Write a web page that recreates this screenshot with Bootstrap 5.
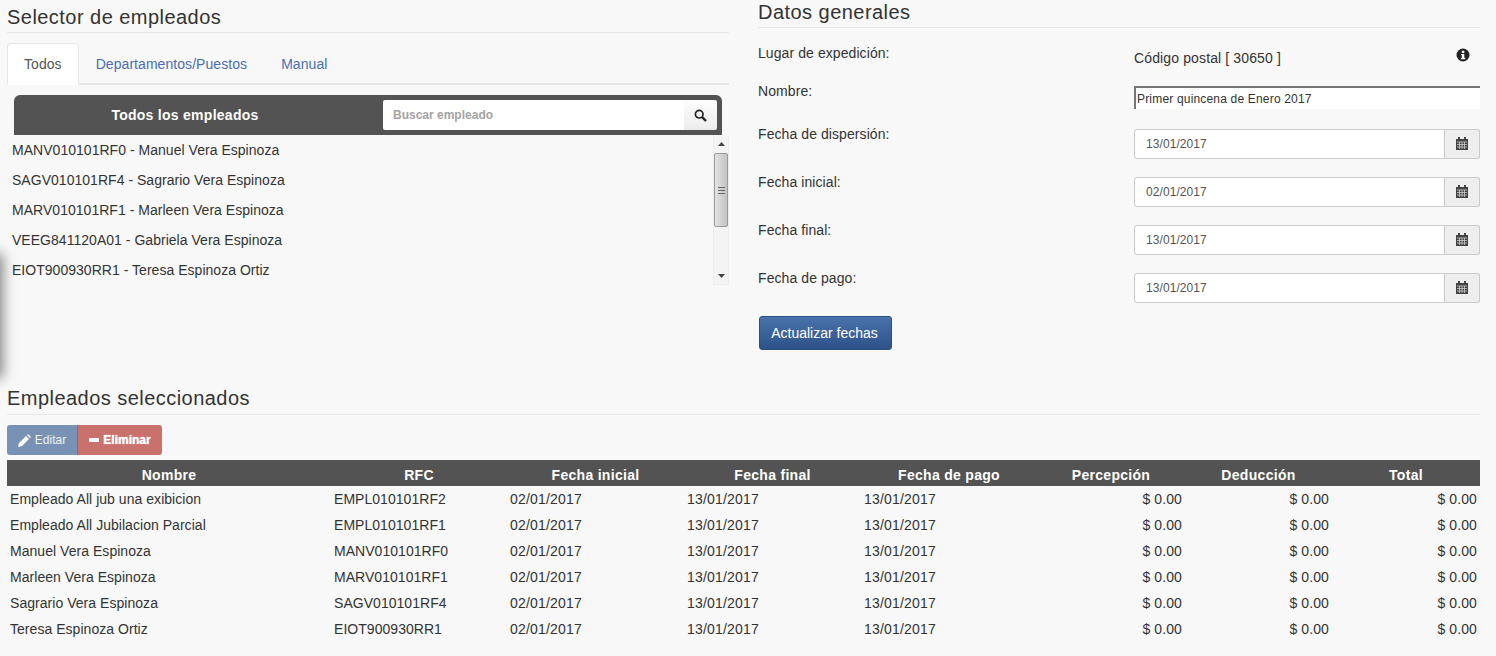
<!DOCTYPE html>
<html lang="es">
<head>
<meta charset="utf-8">
<title>Selector de empleados</title>
<link rel="stylesheet" href="https://cdn.jsdelivr.net/npm/bootstrap@5.3.0/dist/css/bootstrap.min.css">
<style>
body{background:#f8f8f8;color:#333;font-family:"Liberation Sans",Arial,sans-serif;font-size:14px;height:656px;overflow:hidden;position:relative}
.page-wrap{padding:0 16px 0 7px}
.top-cols{display:grid;grid-template-columns:722px 722px;column-gap:29px;height:377px}
.sec-title{font-size:20px;font-weight:400;line-height:22px;margin:0;padding-bottom:4px;border-bottom:1px solid #e7e7e7;color:#333;letter-spacing:.46px}
.left-title{padding-top:6px}
.right-title{margin-top:1px}
.tabs-x{margin-top:10px;height:42px;border-bottom:2px solid #e7e7e7;flex-wrap:nowrap}
.tabs-x .nav-link{height:42px;padding:11px 16px 13px;line-height:18px;color:#4a6eb5;border:1px solid transparent;border-radius:4px 4px 0 0;font-size:14px;letter-spacing:.06px}
.tabs-x .nav-link.active{background:#fff;color:#555;border-color:#e7e7e7 #e7e7e7 #fff}
.emp-panel{padding:10px 7px 0}
.emp-head{background:#535353;border-radius:6px 6px 0 0;height:40px;padding:5px 5px 5px 0;color:#fff}
.emp-head-title{width:342px;margin-right:27px;font-weight:700;text-align:center;font-size:14px;letter-spacing:.27px}
.emp-search{width:334px;height:30px}
.emp-search .form-control{height:30px;font-size:12px;font-weight:700;border:0;border-radius:2px 0 0 2px;padding:0 10px;color:#555;background:#fff;box-shadow:none}
.emp-search .form-control::placeholder{color:#a3a3a3;opacity:1}
.search-btn{width:34px;height:30px;padding:0;border:0;border-radius:0 2px 2px 0;background:linear-gradient(#fdfdfd,#ececec);display:flex;align-items:center;justify-content:center;border-left:1px solid #ddd}
.emp-body{margin:0 -7px 0 -2px;height:150px}
.emp-list{flex:1 1 auto;margin:0;padding:0;list-style:none}
.emp-list li{height:30px;line-height:30px;color:#333;white-space:nowrap;letter-spacing:.03px}
.fake-scroll{width:16px;height:150px;background:#f4f4f4;border:1px solid #ededed;border-width:0 1px 1px 1px;display:flex;flex-direction:column;align-items:center}
.scroll-arrow{height:17px;flex:none;display:flex;align-items:center;justify-content:center}
.scroll-arrow.up-arrow{height:18px}
.scroll-thumb{width:14px;height:74px;border:1px solid #9a9a9a;border-radius:2px;background:linear-gradient(90deg,#e4e4e4,#cfcfcf 60%,#c4c4c4);display:flex;align-items:center;justify-content:center}
.scroll-space{flex:1 1 auto}
.gen-form{padding-top:14px}
.gen-row{display:grid;grid-template-columns:376px 346px;align-items:start}
.gen-label{line-height:20px;color:#333;margin:-5px 0 0;letter-spacing:.08px}
.row-lugar{height:44px}
.row-nombre{height:43px}
.row-fecha{height:48px}
.row-lugar .gen-value{display:flex;justify-content:space-between;padding:6px 10px 0 0;line-height:20px;letter-spacing:.13px}
.row-lugar .gen-label{margin-top:0;padding-top:1px}
.name-input{height:23px;width:346px;font-size:12px;padding:0 1px;border-style:solid;border-width:2px 0 0 2px;border-color:#767676;border-radius:0;background:#fff;color:#333;letter-spacing:.18px}
.date-group{height:30px;width:346px}
.date-group .form-control{height:30px;font-size:12px;padding:0 11px;border:1px solid #ccc;border-radius:3px 0 0 3px;color:#555;box-shadow:none;letter-spacing:.08px}
.date-group .input-group-text{width:36px;height:30px;padding:0;justify-content:center;background:#eee;border:1px solid #ccc;border-left:0;border-radius:0 3px 3px 0}
.date-group svg{margin-top:-2px}
.update-btn{width:133px;height:34px;padding:0 2px 0 0;margin:-5px 0 0 1px;color:#fff;font-size:14px;background:linear-gradient(#4a72ab,#2c5288);border:1px solid #2b4f82;border-radius:3px}
.sel-title{padding-top:10px;padding-bottom:5px}
.sel-title-wrap{width:1473px}
.btn-line{margin-top:10px;height:30px}
.act-btn{height:30px;font-size:12px;padding:0;display:flex;align-items:center;justify-content:center;gap:4px;color:#fff;border:0;border-radius:0;opacity:1}
.act-btn.act-edit{width:70px;background:#7792b4;border-radius:3px 0 0 3px;color:#f2f2f2}
.act-btn.act-del{width:85px;background:#c9726d;font-weight:700;border-radius:0 3px 3px 0;border-left:1px solid #b55a56;text-shadow:0 0 1px #fff}
.emp-table{table-layout:fixed;width:1473px;margin:5px 0 0;border-collapse:collapse;--bs-table-bg:transparent}
.emp-table th{background:#535353;color:#fff;font-weight:700;text-align:center;height:26px;padding:0;border:0;font-size:14px;letter-spacing:.3px}
.emp-table td{height:26px;padding:3px 3px;border:0;font-size:14px;line-height:20px;color:#333;background:transparent;box-shadow:none;white-space:nowrap;letter-spacing:.04px}
.emp-table td.date-cell{letter-spacing:.2px}
.emp-table td.num{text-align:right;letter-spacing:.1px}
.edge-shade{position:absolute;left:-12px;top:256px;width:12px;height:120px;pointer-events:none;box-shadow:0 0 14px 2px #777}
</style>
</head>
<body>
<div class="edge-shade"></div>
<div class="page-wrap">
  <div class="top-cols">
    <section>
      <h2 class="sec-title left-title">Selector de empleados</h2>
      <ul class="nav nav-tabs tabs-x">
        <li class="nav-item"><a class="nav-link active" href="#">Todos</a></li>
        <li class="nav-item"><a class="nav-link" href="#">Departamentos/Puestos</a></li>
        <li class="nav-item"><a class="nav-link" href="#">Manual</a></li>
      </ul>
      <div class="emp-panel">
        <div class="emp-head d-flex align-items-center">
          <div class="emp-head-title">Todos los empleados</div>
          <div class="input-group emp-search flex-nowrap">
            <input class="form-control" type="text" placeholder="Buscar empleado">
            <button class="search-btn" type="button" aria-label="Buscar">
              <svg width="13" height="13" viewBox="0 0 13 13" fill="none" stroke="#222" aria-hidden="true"><circle cx="5.2" cy="5.2" r="3.8" stroke-width="1.7"/><path d="M8 8l4 4" stroke-width="2.4"/></svg>
            </button>
          </div>
        </div>
        <div class="emp-body d-flex">
          <ul class="emp-list">
            <li>MANV010101RF0 - Manuel Vera Espinoza</li>
            <li>SAGV010101RF4 - Sagrario Vera Espinoza</li>
            <li>MARV010101RF1 - Marleen Vera Espinoza</li>
            <li>VEEG841120A01 - Gabriela Vera Espinoza</li>
            <li>EIOT900930RR1 - Teresa Espinoza Ortiz</li>
          </ul>
          <div class="fake-scroll" aria-hidden="true">
            <div class="scroll-arrow up-arrow"><svg width="7" height="4" viewBox="0 0 7 4"><path d="M3.5 0L7 4H0z" fill="#444"/></svg></div>
            <div class="scroll-thumb"><svg width="7" height="7" viewBox="0 0 7 7" stroke="#666"><path d="M0 .5h7M0 3.5h7M0 6.500h7"/></svg></div>
            <div class="scroll-space"></div>
            <div class="scroll-arrow"><svg width="7" height="4" viewBox="0 0 7 4"><path d="M0 0H7L3.500 4z" fill="#444"/></svg></div>
          </div>
        </div>
      </div>
    </section>
    <section>
      <h2 class="sec-title right-title">Datos generales</h2>
      <div class="gen-form">
        <div class="gen-row row-lugar">
          <label class="gen-label">Lugar de expedición:</label>
          <div class="gen-value"><span>Código postal [ 30650 ]</span>
            <svg width="14" height="14" viewBox="0 0 14 14" class="mt-n1" aria-hidden="true"><circle cx="7" cy="7" r="6.500" fill="#222"/><rect x="5.800" y="2.800" width="2.500" height="2.200" fill="#f8f8f8"/><path d="M5 6h3.300v3.800h1v1.400H4.900V9.800h1V7.300H5z" fill="#f8f8f8"/></svg>
          </div>
        </div>
        <div class="gen-row row-nombre">
          <label class="gen-label">Nombre:</label>
          <input class="name-input" type="text" value="Primer quincena de Enero 2017">
        </div>
        <div class="gen-row row-fecha">
          <label class="gen-label">Fecha de dispersión:</label>
          <div class="input-group date-group flex-nowrap"><input class="form-control" type="text" value="13/01/2017"><span class="input-group-text"><svg width="12" height="13" viewBox="0 0 12 13" aria-hidden="true"><path d="M2 0h2v2h4V0h2v2h2v11H0V2h2z" fill="#444"/><path d="M1 5h10M1 7.500h10M1 10h10M3.500 5v7M6 5v7M8.500 5v7" stroke="#ddd" stroke-width=".7"/></svg></span></div>
        </div>
        <div class="gen-row row-fecha">
          <label class="gen-label">Fecha inicial:</label>
          <div class="input-group date-group flex-nowrap"><input class="form-control" type="text" value="02/01/2017"><span class="input-group-text"><svg width="12" height="13" viewBox="0 0 12 13" aria-hidden="true"><path d="M2 0h2v2h4V0h2v2h2v11H0V2h2z" fill="#444"/><path d="M1 5h10M1 7.500h10M1 10h10M3.500 5v7M6 5v7M8.500 5v7" stroke="#ddd" stroke-width=".7"/></svg></span></div>
        </div>
        <div class="gen-row row-fecha">
          <label class="gen-label">Fecha final:</label>
          <div class="input-group date-group flex-nowrap"><input class="form-control" type="text" value="13/01/2017"><span class="input-group-text"><svg width="12" height="13" viewBox="0 0 12 13" aria-hidden="true"><path d="M2 0h2v2h4V0h2v2h2v11H0V2h2z" fill="#444"/><path d="M1 5h10M1 7.500h10M1 10h10M3.500 5v7M6 5v7M8.500 5v7" stroke="#ddd" stroke-width=".7"/></svg></span></div>
        </div>
        <div class="gen-row row-fecha">
          <label class="gen-label">Fecha de pago:</label>
          <div class="input-group date-group flex-nowrap"><input class="form-control" type="text" value="13/01/2017"><span class="input-group-text"><svg width="12" height="13" viewBox="0 0 12 13" aria-hidden="true"><path d="M2 0h2v2h4V0h2v2h2v11H0V2h2z" fill="#444"/><path d="M1 5h10M1 7.500h10M1 10h10M3.500 5v7M6 5v7M8.500 5v7" stroke="#ddd" stroke-width=".7"/></svg></span></div>
        </div>
        <button class="btn update-btn" type="button">Actualizar fechas</button>
      </div>
    </section>
  </div>
  <section class="sel-title-wrap">
    <h2 class="sec-title sel-title">Empleados seleccionados</h2>
    <div class="d-flex btn-line" role="group">
      <button class="btn act-btn act-edit" type="button"><svg width="13" height="13" viewBox="0 0 13 13" aria-hidden="true"><path d="M0 13l1-4 7-7 3 3-7 7zM9 1l1-1 3 3-1 1z" fill="#fff"/></svg>Editar</button>
      <button class="btn act-btn act-del" type="button"><svg width="10" height="4" viewBox="0 0 10 4" aria-hidden="true"><rect width="10" height="4" rx="1" fill="#fff"/></svg>Eliminar</button>
    </div>
    <table class="table emp-table">
      <colgroup><col style="width:324px"><col style="width:176px"><col style="width:177px"><col style="width:177px"><col style="width:176px"><col style="width:148px"><col style="width:147px"><col style="width:148px"></colgroup>
      <thead><tr><th>Nombre</th><th>RFC</th><th>Fecha inicial</th><th>Fecha final</th><th>Fecha de pago</th><th>Percepción</th><th>Deducción</th><th>Total</th></tr></thead>
      <tbody>
        <tr><td>Empleado All jub una exibicion</td><td>EMPL010101RF2</td><td class="date-cell">02/01/2017</td><td class="date-cell">13/01/2017</td><td class="date-cell">13/01/2017</td><td class="num">$ 0.00</td><td class="num">$ 0.00</td><td class="num">$ 0.00</td></tr>
        <tr><td>Empleado All Jubilacion Parcial</td><td>EMPL010101RF1</td><td class="date-cell">02/01/2017</td><td class="date-cell">13/01/2017</td><td class="date-cell">13/01/2017</td><td class="num">$ 0.00</td><td class="num">$ 0.00</td><td class="num">$ 0.00</td></tr>
        <tr><td>Manuel Vera Espinoza</td><td>MANV010101RF0</td><td class="date-cell">02/01/2017</td><td class="date-cell">13/01/2017</td><td class="date-cell">13/01/2017</td><td class="num">$ 0.00</td><td class="num">$ 0.00</td><td class="num">$ 0.00</td></tr>
        <tr><td>Marleen Vera Espinoza</td><td>MARV010101RF1</td><td class="date-cell">02/01/2017</td><td class="date-cell">13/01/2017</td><td class="date-cell">13/01/2017</td><td class="num">$ 0.00</td><td class="num">$ 0.00</td><td class="num">$ 0.00</td></tr>
        <tr><td>Sagrario Vera Espinoza</td><td>SAGV010101RF4</td><td class="date-cell">02/01/2017</td><td class="date-cell">13/01/2017</td><td class="date-cell">13/01/2017</td><td class="num">$ 0.00</td><td class="num">$ 0.00</td><td class="num">$ 0.00</td></tr>
        <tr><td>Teresa Espinoza Ortiz</td><td>EIOT900930RR1</td><td class="date-cell">02/01/2017</td><td class="date-cell">13/01/2017</td><td class="date-cell">13/01/2017</td><td class="num">$ 0.00</td><td class="num">$ 0.00</td><td class="num">$ 0.00</td></tr>
      </tbody>
    </table>
  </section>
</div>
<script src="https://cdn.jsdelivr.net/npm/bootstrap@5.3.0/dist/js/bootstrap.bundle.min.js"></script>
</body>
</html>
